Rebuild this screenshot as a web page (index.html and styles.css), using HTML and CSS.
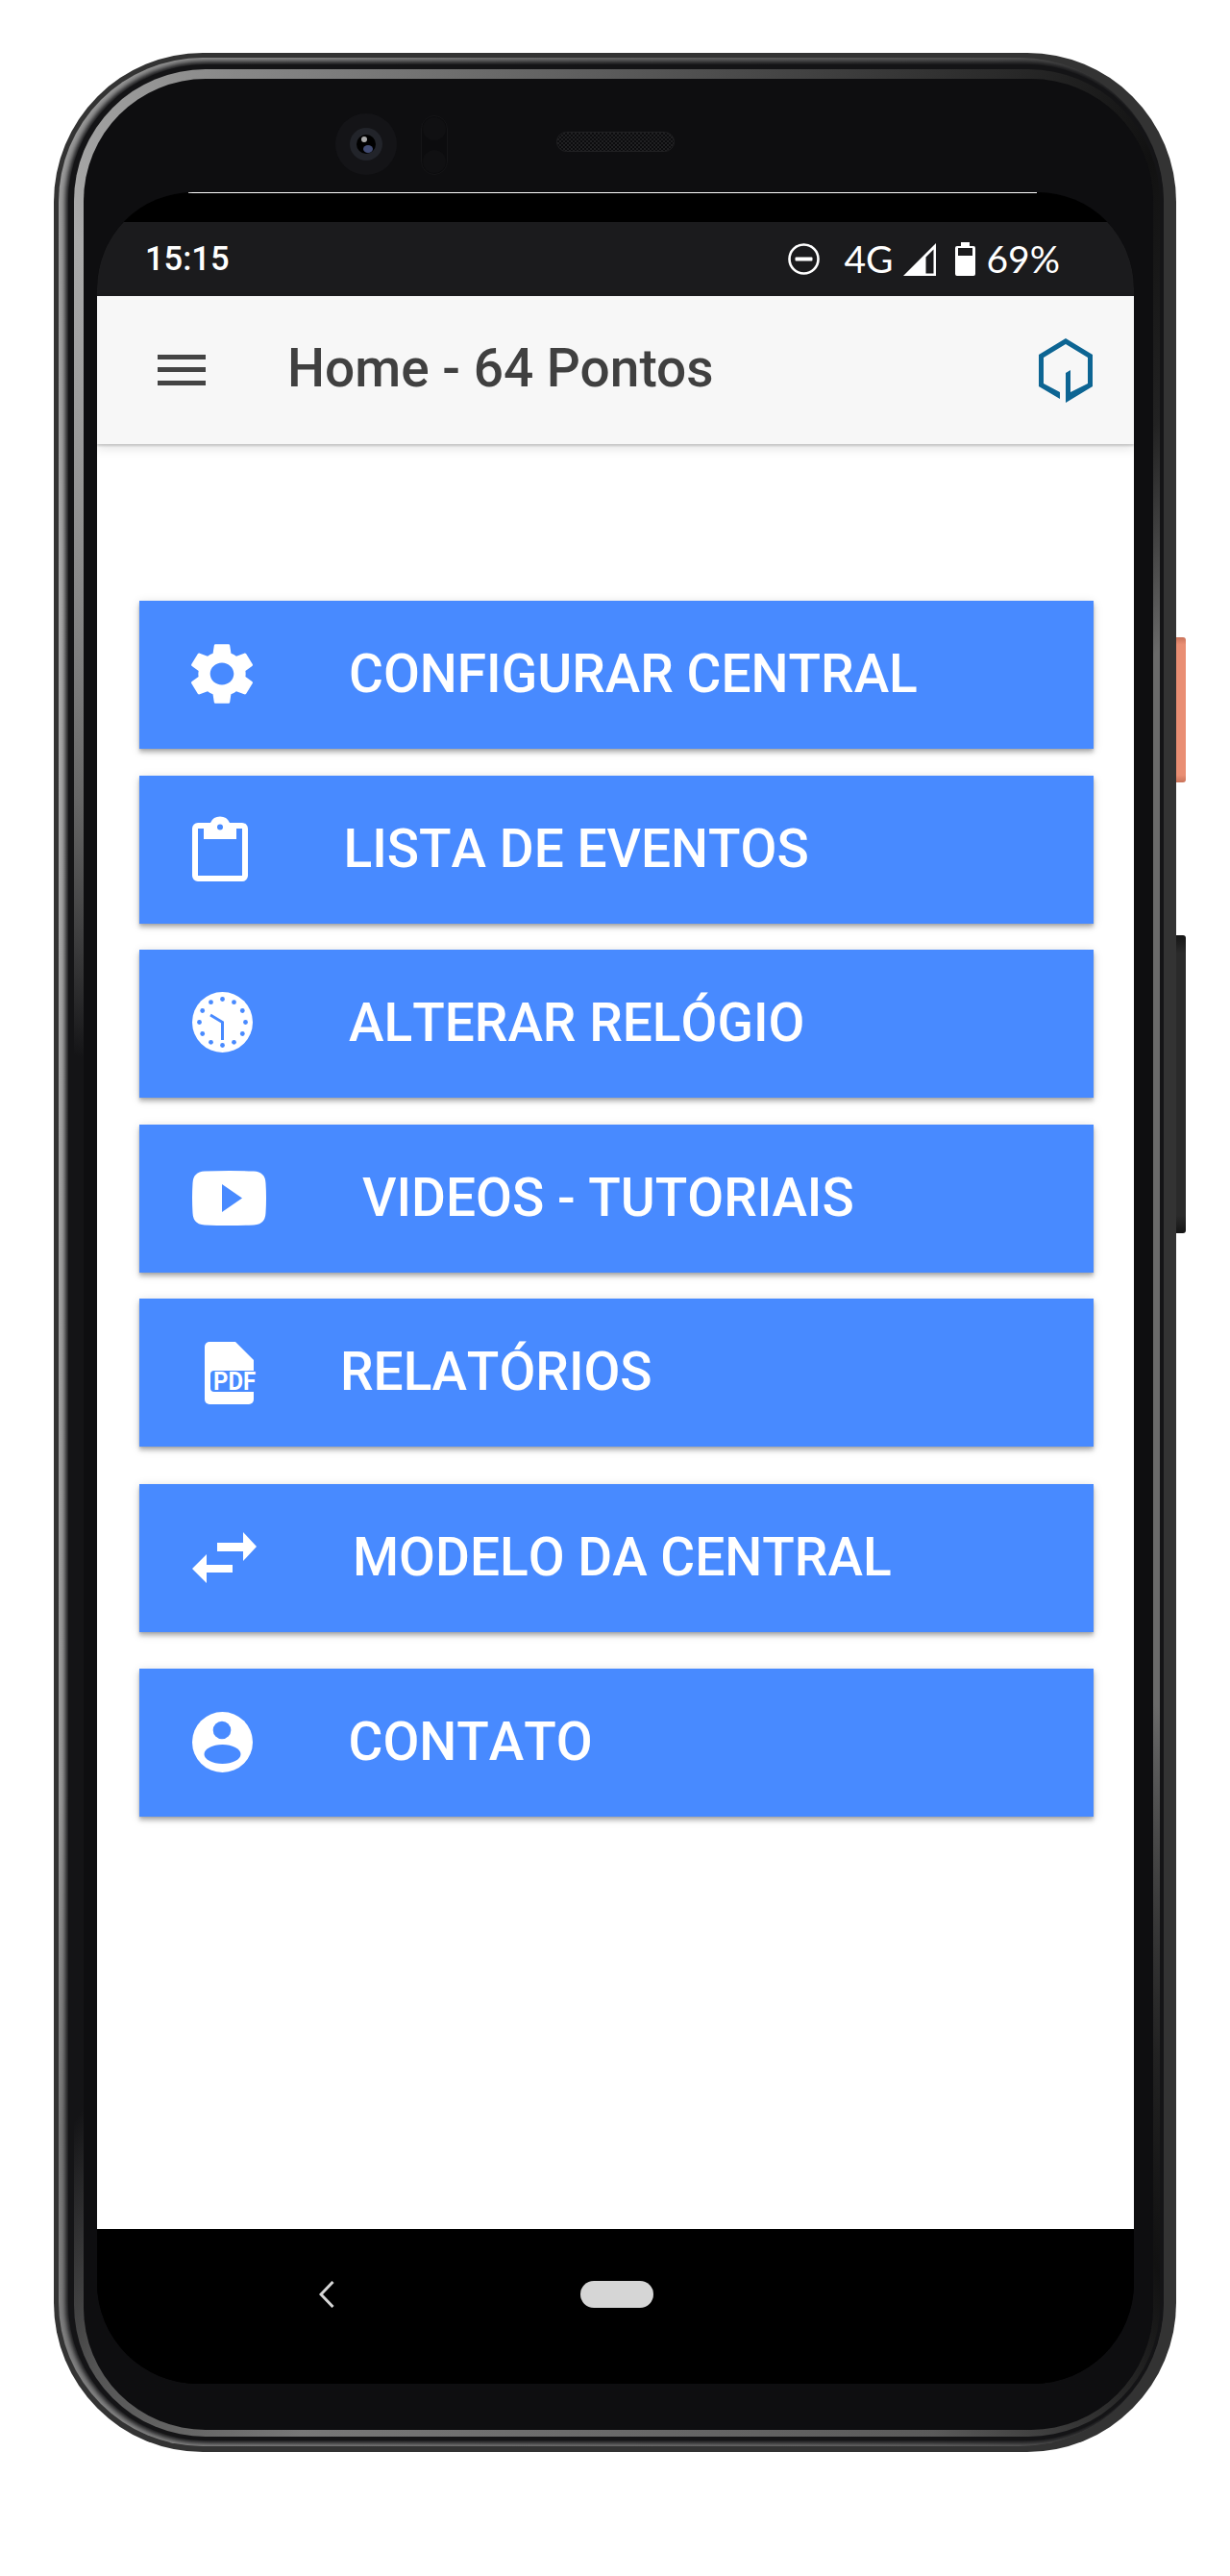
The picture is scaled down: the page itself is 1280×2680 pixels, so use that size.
FILE: index.html
```html
<!DOCTYPE html>
<html lang="pt">
<head>
<meta charset="utf-8">
<title>Home - 64 Pontos</title>
<link rel="stylesheet" href="styles.css">
</head>
<body>
<div class="device">
  <div class="frame">
    <div class="frame-edge">
      <div class="frame-gap">
        <div class="frame-metal">
          <div class="bezel">
            <div class="sensors">
              <div class="camera"><div class="lens"><div class="pupil"><span class="glint"></span><span class="glare"></span></div></div></div>
              <div class="prox"><span class="prox-dot"></span><span class="prox-dot"></span></div>
              <div class="speaker"></div>
            </div>
            <div class="screen">
              <div class="top-line"></div>
              <div class="notch"></div>
              <div class="status">
                <span class="time">15:15</span>
                <div class="status-right">
                  <svg class="st-dnd" width="33" height="33" viewBox="0 0 33 33"><circle cx="16.5" cy="16.5" r="15" fill="none" stroke="#fff" stroke-width="2.6"/><rect x="7.5" y="14.5" width="18" height="4" rx="1" fill="#fff"/></svg>
                  <span class="st-text st-net">4G</span>
                  <svg class="st-signal" width="34" height="34" viewBox="0 0 34 34"><path fill="#fff" fill-rule="evenodd" d="M34 0V34H0ZM31.5 6.500 23.500 14.500V31.500H31.500Z"/></svg>
                  <svg class="st-batt" width="21" height="35" viewBox="0 0 21 35"><path fill="#fff" fill-rule="evenodd" d="M6 0H15V4H19Q21 4 21 6V33Q21 35 19 35H2Q0 35 0 33V6Q0 4 2 4H6ZM3 6V14H18V6Z"/></svg>
                  <span class="st-text st-pct">69%</span>
                </div>
              </div>
              <header class="toolbar">
                <div class="menu"><span></span><span></span><span></span></div>
                <h1 class="title">Home - 64 Pontos</h1>
                <svg class="logo" width="56" height="67" viewBox="0 0 56 67"><path fill="#0d6593" d="M22 63 0 50V17L28 0 56 17V50L28 67V36L33 33V56L51 47V20L28 6 5 20V47L22 56Z"/></svg>
              </header>
              <main class="content">
                <a class="btn btn-config">
                  <svg class="icon" width="64" height="64" viewBox="2.65 2 18.7 20" preserveAspectRatio="none"><path fill="#fff" d="M19.14 12.94c.04-.3.06-.61.06-.94 0-.32-.02-.64-.07-.94l2.03-1.58c.18-.14.23-.41.12-.61l-1.92-3.32c-.12-.22-.37-.29-.59-.22l-2.39.96c-.5-.38-1.03-.7-1.62-.94l-.36-2.54c-.04-.24-.24-.41-.48-.41h-3.84c-.24 0-.43.17-.47.41l-.36 2.54c-.59.24-1.13.57-1.62.94l-2.39-.96c-.22-.08-.47 0-.59.22L2.74 8.87c-.12.21-.08.47.12.61l2.03 1.58c-.05.3-.09.63-.09.94s.02.64.07.94l-2.03 1.58c-.18.14-.23.41-.12.61l1.92 3.32c.12.22.37.29.59.22l2.39-.96c.5.38 1.03.7 1.62.94l.36 2.54c.05.24.24.41.48.41h3.84c.24 0 .44-.17.47-.41l.36-2.54c.59-.24 1.13-.56 1.62-.94l2.39.96c.22.08.47 0 .59-.22l1.92-3.32c.12-.22.07-.47-.12-.61l-2.01-1.58zM12 15.6c-1.98 0-3.6-1.62-3.6-3.6s1.62-3.6 3.6-3.6 3.6 1.62 3.6 3.6-1.62 3.6-3.6 3.6z"/></svg>
                  <span class="btn-label">CONFIGURAR CENTRAL</span>
                </a>
                <a class="btn btn-list">
                  <svg class="icon" width="58" height="68" viewBox="0 0 58 68"><path fill="#fff" fill-rule="evenodd" d="M6 7H19A11 11 0 0 1 39 7H52A6 6 0 0 1 58 13V62A6 6 0 0 1 52 68H6A6 6 0 0 1 0 62V13A6 6 0 0 1 6 7ZM6 13V62H52V13H46V24H12V13ZM29 8.500A3 3 0 1 0 29 14.500A3 3 0 1 0 29 8.500Z"/></svg>
                  <span class="btn-label">LISTA DE EVENTOS</span>
                </a>
                <a class="btn btn-clock">
                  <svg class="icon" width="63" height="63" viewBox="0 0 63 63">
                    <circle cx="31.500" cy="31.500" r="31.500" fill="#fff"/>
                    <g fill="#488aff">
                      <circle cx="31.500" cy="7.500" r="2.400"/><circle cx="43.500" cy="10.700" r="2.400"/><circle cx="52.300" cy="19.500" r="2.400"/><circle cx="55.500" cy="31.500" r="2.400"/><circle cx="52.300" cy="43.500" r="2.400"/><circle cx="43.500" cy="52.300" r="2.400"/><circle cx="31.500" cy="55.500" r="2.400"/><circle cx="19.500" cy="52.300" r="2.400"/><circle cx="10.700" cy="43.500" r="2.400"/><circle cx="7.500" cy="31.500" r="2.400"/><circle cx="10.700" cy="19.500" r="2.400"/><circle cx="19.500" cy="10.700" r="2.400"/>
                    </g>
                    <path d="M19 24 31.500 31.500V50" fill="none" stroke="#488aff" stroke-width="3"/>
                  </svg>
                  <span class="btn-label">ALTERAR RELÓGIO</span>
                </a>
                <a class="btn btn-video">
                  <svg class="icon" width="77" height="57" viewBox="0 0 77 57"><path fill="#fff" fill-rule="evenodd" d="M13 .5Q38.500-.5 64 .5 76 1 76.500 13 77.500 28.500 76.500 44 76 56 64 56.500 38.500 57.500 13 56.500 1 56 .5 44-.5 28.500 .5 13 1 1 13 .5ZM31 14V43L52 28.500Z"/></svg>
                  <span class="btn-label">VIDEOS - TUTORIAIS</span>
                </a>
                <a class="btn btn-report">
                  <svg class="icon" width="58" height="65" viewBox="0 0 58 65">
                    <path fill="#fff" d="M5 0H32L51 19V60A5 5 0 0 1 46 65H5A5 5 0 0 1 0 60V5A5 5 0 0 1 5 0Z"/>
                    <path fill="#488aff" d="M10 30H58V52H10A4 4 0 0 1 6 48V34A4 4 0 0 1 10 30Z"/>
                    <text class="pdf-text" x="9" y="50" textLength="44" lengthAdjust="spacingAndGlyphs">PDF</text>
                  </svg>
                  <span class="btn-label">RELATÓRIOS</span>
                </a>
                <a class="btn btn-model">
                  <svg class="icon" width="67" height="53" viewBox="0 0 67 53"><path fill="#fff" d="M26 11H53V0L67 15 53 30V20H26ZM42 34V42H15V53L0 38 15 23V34Z"/></svg>
                  <span class="btn-label">MODELO DA CENTRAL</span>
                </a>
                <a class="btn btn-contact">
                  <svg class="icon" width="63" height="63" viewBox="0 0 63 63"><circle cx="31.500" cy="31.500" r="31.500" fill="#fff"/><circle cx="31" cy="19" r="9.300" fill="#488aff"/><ellipse cx="31.500" cy="44" rx="19" ry="10" fill="#488aff"/></svg>
                  <span class="btn-label">CONTATO</span>
                </a>
              </main>
              <nav class="navbar">
                <svg class="nav-back" width="16" height="28" viewBox="0 0 16 28"><path d="M14.500 1 2 14 14.500 27" fill="none" stroke="#d6d6d6" stroke-width="3"/></svg>
                <span class="nav-home"></span>
              </nav>
            </div>
          </div>
        </div>
      </div>
    </div>
  </div>
  <div class="side">
    <span class="side-power"></span>
    <span class="side-volume"></span>
  </div>
</div>
</body>
</html>
```

FILE: styles.css
```css
* { box-sizing: border-box; }
html, body { margin: 0; padding: 0; background: #fff; }
body { width: 1280px; height: 2680px; overflow: hidden; font-family: Roboto, "Liberation Sans", sans-serif; }

.device { display: flex; align-items: flex-start; padding: 55px 0 0 56px; }

.frame { width: 1168px; height: 2496px; padding: 5px 13px 6px 5px; border-radius: 155px; background: #333; }
.frame-edge {
  height: 100%; padding: 7px 0 6px 10px; border-radius: 150px; overflow: hidden;
  background: conic-gradient(from 0deg at 50% 50%, #6a6a6a 0deg, #555 18deg, #333 28deg, #333 150deg, #6a6a6a 165deg, #888 200deg, #777 212deg, #999 225deg, #aaa 320deg, #8a8a8a 345deg, #6a6a6a 360deg);
}
.frame-gap { height: 100%; padding: 5px 4px 4px 6px; border-radius: 143px; background: #141416; box-shadow: 0 0 5px 3px #141416; }
.frame-metal {
  height: 100%; padding: 10px 7px 7px 10px; border-radius: 137px;
  background: conic-gradient(from 0deg at 50% 50%, #5a5a5a 0deg, #2a2a2a 18deg, #111 26deg, #222 33deg, #6a6a6a 42deg, #6a6a6a 130deg, #222 146deg, #111 152deg, #5a5a5a 165deg, #777 195deg, #555 205deg, #141416 212deg, #141416 290deg, #666 310deg, #999 326deg, #aaa 332deg, #888 342deg, #5a5a5a 360deg);
}
.bezel { height: 100%; display: flex; flex-direction: column; border-radius: 127px; background: #0e0e10; }

.sensors { height: 118px; flex: none; display: flex; align-items: flex-start; padding: 36px 0 0 262px; }
.camera { width: 64px; height: 64px; flex: none; display: flex; align-items: center; justify-content: center; border-radius: 50%; background: #141417; }
.lens { width: 34px; height: 34px; display: flex; align-items: center; justify-content: center; border-radius: 50%; background: #22242a; }
.pupil { position: relative; width: 20px; height: 20px; border-radius: 50%; background: #000; }
.glint { position: absolute; left: 5px; top: 2px; width: 6px; height: 6px; border-radius: 50%; background: #aaa; }
.glare { position: absolute; left: 7px; top: 11px; width: 10px; height: 8px; border-radius: 50%; background: #414b72; }
.prox { width: 28px; height: 62px; flex: none; display: flex; flex-direction: column; justify-content: space-between; align-items: center; margin: 2px 0 0 25px; padding: 1px 0; border-radius: 14px; background: #0c0c0e; border: 1px solid #151517; }
.prox-dot { width: 24px; height: 24px; border-radius: 50%; background: #101012; }
.speaker { width: 123px; height: 21px; flex: none; margin: 19px 0 0 113px; border-radius: 11px; border: 1px solid #202022; background: repeating-conic-gradient(#202022 0 25%, #0c0c0e 0 50%) 0 0 / 4px 4px; }

.screen { width: 1079px; height: 2280px; margin-left: 14px; flex: none; display: flex; flex-direction: column; overflow: hidden; border-radius: 100px 100px 105px 105px; background: #000; }
.top-line { height: 1px; flex: none; margin: 0 101px 0 95px; background: #fff; }
.notch { height: 30px; flex: none; }

.status { height: 77px; flex: none; display: flex; align-items: center; justify-content: space-between; padding: 0 77px 0 50px; background: #1b1b1d; color: #fff; }
.time { font-size: 34.500px; font-weight: 500; line-height: 1; }
.status-right { display: flex; align-items: center; }
.st-text { font-family: Lato, "Noto Sans", sans-serif; font-size: 39px; line-height: 1; }
.st-net { margin-left: 25px; }
.st-signal { margin-left: 10px; }
.st-batt { margin-left: 20px; }
.st-pct { margin-left: 12px; }

.toolbar { position: relative; z-index: 1; height: 154px; flex: none; display: flex; align-items: center; padding: 0 43px 0 63px; background: #f7f7f7; box-shadow: 0 2px 2px rgba(0,0,0,.16), 0 5px 10px rgba(0,0,0,.1); }
.menu { width: 50px; height: 32px; flex: none; display: flex; flex-direction: column; justify-content: space-between; margin-top: -1px; }
.menu span { height: 5px; background: #444; }
.title { flex: 1; margin: -3px 0 0 85px; font-size: 55px; font-weight: 500; line-height: 1; color: #404040; }
.logo { flex: none; }

.content { flex: 1; display: flex; flex-direction: column; gap: 27px; padding: 163px 42px 0 44px; background: #fff; }
.btn { height: 154px; flex: none; display: flex; align-items: center; padding-left: 54px; background: #488aff; color: #fff; box-shadow: 0 4px 4px rgba(0,0,0,.2), 0 1px 2px rgba(0,0,0,.12), 0 2px 10px rgba(0,0,0,.14); }
.btn-list, .btn-video { margin-top: 1px; }
.btn-model { margin-top: 12px; }
.btn-contact { margin-top: 11px; }
.icon { flex: none; }
.btn-label { margin-top: -2px; font-size: 55px; font-weight: 500; line-height: 1; font-kerning: none; }
.pdf-text { font-family: Roboto, sans-serif; font-size: 26px; font-weight: 700; fill: #fff; }

.btn-config .icon { margin-top: -2px; }
.btn-config .btn-label { margin-left: 100px; }
.btn-list .icon { margin: -2px 0 0 1px; }
.btn-list .btn-label { margin-left: 99.500px; }
.btn-clock .icon { margin: -3px 0 0 1px; }
.btn-clock .btn-label { margin-left: 100px; }
.btn-video .icon { margin: -1px 0 0 1px; }
.btn-video .btn-label { margin-left: 100px; }
.btn-report .icon { margin: 1px 0 0 14px; }
.btn-report .btn-label { margin-left: 83px; }
.btn-model .icon { margin: -2px 0 0 1px; }
.btn-model .btn-label { margin-left: 100px; }
.btn-contact .icon { margin: -2px 0 0 1px; }
.btn-contact .btn-label { margin-left: 99.500px; }

.navbar { height: 161px; flex: none; display: flex; align-items: flex-start; padding: 54px 0 0 231px; background: #000; }
.nav-back { flex: none; }
.nav-home { width: 76px; height: 28px; flex: none; margin-left: 255.500px; border-radius: 14px; background: #d6d6d6; }

.side { width: 10px; flex: none; display: flex; flex-direction: column; padding-top: 608px; }
.side-power { height: 151px; border-radius: 0 3px 3px 0; background: linear-gradient(#c9735a, #e98e73 5%, #e98e73 95%, #c9735a); }
.side-volume { height: 310px; margin-top: 159px; border-radius: 0 3px 3px 0; background: linear-gradient(#151515, #2a2a2a 6%, #2a2a2a 94%, #151515); }
```
